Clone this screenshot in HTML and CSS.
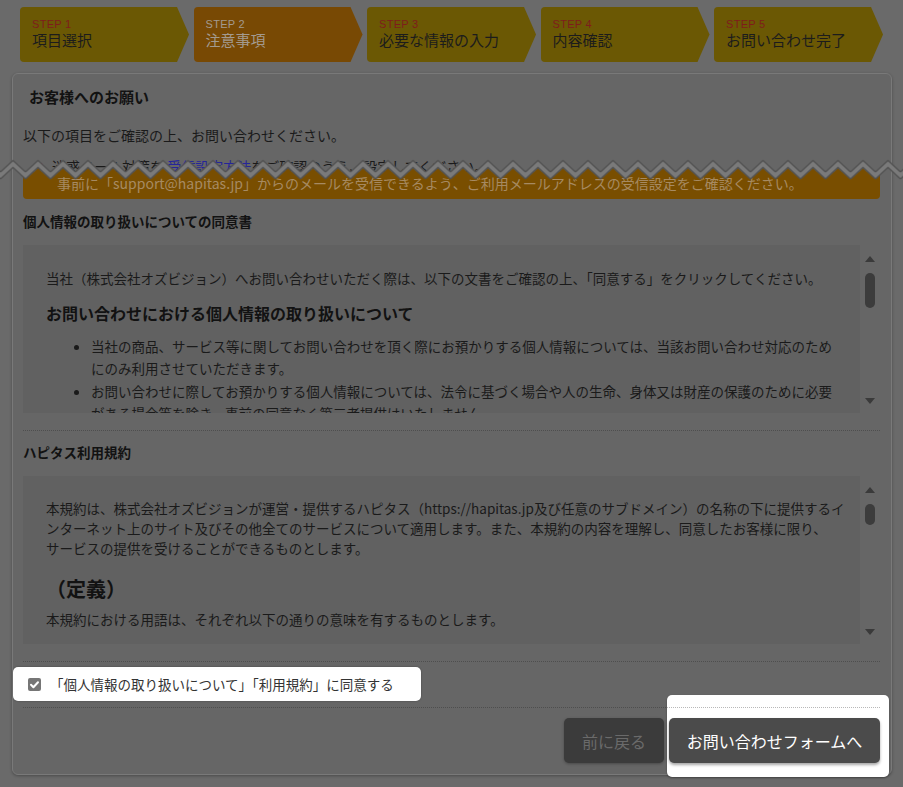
FILE: index.html
```html
<!DOCTYPE html>
<html lang="ja">
<head>
<meta charset="utf-8">
<title>お問い合わせ｜注意事項</title>
<link rel="stylesheet" href="styles.css">
</head>
<body>
<div class="page">
  <ol class="steps">
    <li class="step"><span class="step-no">STEP 1</span><span class="step-name">項目選択</span></li>
    <li class="step is-current"><span class="step-no">STEP 2</span><span class="step-name">注意事項</span></li>
    <li class="step"><span class="step-no">STEP 3</span><span class="step-name">必要な情報の入力</span></li>
    <li class="step"><span class="step-no">STEP 4</span><span class="step-name">内容確認</span></li>
    <li class="step"><span class="step-no">STEP 5</span><span class="step-name">お問い合わせ完了</span></li>
  </ol>

  <section class="card">
    <h2 class="card-title">お客様へのお願い</h2>
    <p class="intro">以下の項目をご確認の上、お問い合わせください。</p>
    <p class="cut-line"><span class="mark">▲</span>迷惑メール対策を <span class="link">受信設定方法</span>をご確認のうえ、設定してください。</p>
    <p class="notice">事前に「support@hapitas.jp」からのメールを受信できるよう、ご利用メールアドレスの受信設定をご確認ください。</p>

    <h3 class="sec-title">個人情報の取り扱いについての同意書</h3>
    <div class="scrollbox">
      <div class="sb-content">
        <p class="lead">当社（株式会社オズビジョン）へお問い合わせいただく際は、以下の文書をご確認の上、「同意する」をクリックしてください。</p>
        <h4 class="doc-title">お問い合わせにおける個人情報の取り扱いについて</h4>
        <ul class="doc-list">
          <li>当社の商品、サービス等に関してお問い合わせを頂く際にお預かりする個人情報については、当該お問い合わせ対応のため<br>にのみ利用させていただきます。</li>
          <li>お問い合わせに際してお預かりする個人情報については、法令に基づく場合や人の生命、身体又は財産の保護のために必要<br>がある場合等を除き、事前の同意なく第三者提供はいたしません。</li>
        </ul>
      </div>
      <div class="sb-bar"><span class="sb-up"></span><span class="sb-thumb"></span><span class="sb-down"></span></div>
    </div>

    <hr class="sep">

    <h3 class="sec-title sec-title-2">ハピタス利用規約</h3>
    <div class="scrollbox">
      <div class="sb-content">
        <p class="terms">本規約は、株式会社オズビジョンが運営・提供するハピタス（https://hapitas.jp及び任意のサブドメイン）の名称の下に提供するイ<br>ンターネット上のサイト及びその他全てのサービスについて適用します。また、本規約の内容を理解し、同意したお客様に限り、<br>サービスの提供を受けることができるものとします。</p>
        <h4 class="def-title">（定義）</h4>
        <p class="terms terms-2">本規約における用語は、それぞれ以下の通りの意味を有するものとします。</p>
      </div>
      <div class="sb-bar"><span class="sb-up"></span><span class="sb-thumb sb-thumb-small"></span><span class="sb-down"></span></div>
    </div>

    <hr class="sep">

    <label class="agree">
      <span class="check"><svg width="13" height="13" viewBox="0 0 13 13"><polyline points="3,6.8 5.4,9.2 10,4.2" fill="none" stroke="#fff" stroke-width="2" stroke-linecap="round" stroke-linejoin="round"/></svg></span>
      <span class="agree-text">「個人情報の取り扱いについて」「利用規約」に同意する</span>
    </label>

    <hr class="sep sep-last">

    <div class="footer">
      <span class="spot"></span>
      <button class="btn btn-prev" type="button">前に戻る</button>
      <button class="btn btn-next" type="button">お問い合わせフォームへ</button>
    </div>
  </section>

  <svg class="tear" width="903" height="34" viewBox="0 0 903 34" aria-hidden="true">
    <defs>
      <pattern id="zz" x="0.5" y="0" width="25" height="34" patternUnits="userSpaceOnUse">
        <polygon points="0,22 12.5,10.5 25,22 25,29 12.5,17.5 0,29" fill="#7a7a7a"/>
        <polyline points="0,22 12.5,10.5 25,22" fill="none" stroke="#525252" stroke-width="1.4"/>
        <polyline points="0,29 12.5,17.5 25,29" fill="none" stroke="#525252" stroke-width="1.4"/>
      </pattern>
      <pattern id="zo" x="0.5" y="0" width="25" height="34" patternUnits="userSpaceOnUse">
        <polygon points="7.6,22.5 12.5,17.5 17.4,22.5" fill="#794e00"/>
      </pattern>
    </defs>
    <rect x="23" y="0" width="857" height="34" fill="url(#zo)"/>
    <rect x="0" y="0" width="903" height="34" fill="url(#zz)"/>
  </svg>
</div>
</body>
</html>
```
FILE: styles.css
```css
* {
  box-sizing: border-box;
  margin: 0;
  padding: 0;
}

html,
body {
  height: 100%;
}

body {
  background: #6a6a6a;
  font-family: "Noto Sans CJK JP", "Noto Sans", sans-serif;
  color: #1a1a1a;
  overflow: hidden;
}

.page {
  position: relative;
  width: 903px;
  height: 787px;
  padding-top: 7px;
}

/* ---------- steps ---------- */
.steps {
  list-style: none;
  display: flex;
  gap: 4.5px;
  margin-left: 20px;
}

.step {
  width: 169px;
  height: 55px;
  background: #6b5804;
  border-radius: 4px 0 0 4px;
  clip-path: polygon(0 0, calc(100% - 12px) 0, 100% 50%, calc(100% - 12px) 100%, 0 100%);
  padding: 10px 0 0 12px;
  display: flex;
  flex-direction: column;
}

.step.is-current {
  background: #784904;
}

.step-no {
  font-family: "Liberation Sans", Arial, sans-serif;
  font-size: 11px;
  line-height: 14px;
  letter-spacing: 0.3px;
  color: #7e1c1c;
}

.step-name {
  font-size: 15px;
  line-height: 18px;
  color: #1c1c1c;
}

.is-current .step-no,
.is-current .step-name {
  color: #a39a8f;
}

/* ---------- card ---------- */
.card {
  position: relative;
  width: 880px;
  margin: 11px 0 0 12px;
  border: 1px solid #797979;
  border-radius: 6px;
  background: #666;
  padding: 0 11px 11px 10px;
  box-shadow: 0 1px 3px rgba(0, 0, 0, 0.3);
}

.card-title {
  padding: 11px 0 0 6px;
  font-size: 15px;
  line-height: 24px;
  font-weight: 700;
  color: #121212;
}

.intro {
  margin-top: 16px;
  font-size: 14px;
  line-height: 20px;
}

.cut-line {
  margin-top: 14px;
  height: 13px;
  overflow: hidden;
  padding-left: 14px;
  font-size: 14px;
  line-height: 14px;
  white-space: nowrap;
}

.cut-line .mark {
  font-size: 9px;
  color: #7e1c1c;
  margin-right: 6px;
  vertical-align: 2px;
}

.cut-line .link {
  color: #25259a;
}

.notice {
  background: #794e00;
  border-radius: 0 0 4px 4px;
  padding: 1px 10px 6px 34px;
  font-size: 14px;
  line-height: 20px;
  color: #a68a62;
  white-space: nowrap;
}

.sec-title {
  margin-top: 12px;
  font-size: 13.5px;
  line-height: 20px;
  font-weight: 700;
  color: #121212;
}

.sec-title-2 {
  margin-top: 11px;
}

/* ---------- scroll boxes ---------- */
.scrollbox {
  display: flex;
  height: 168px;
  margin-top: 14px;
}

.sb-content {
  flex: 1;
  background: #616161;
  overflow: hidden;
  padding: 22px 10px 0 23px;
  font-size: 13.5px;
  white-space: nowrap;
}

.lead {
  line-height: 22px;
}

.doc-title {
  margin-top: 11px;
  font-size: 16px;
  line-height: 26px;
  font-weight: 700;
  color: #121212;
}

.doc-list {
  margin-top: 9px;
  padding-left: 45px;
  list-style: disc;
}

.doc-list li {
  line-height: 22px;
}

.doc-list li + li {
  margin-top: 1px;
}

.terms {
  line-height: 20px;
}

.def-title {
  margin-top: 16px;
  font-size: 20px;
  line-height: 30px;
  font-weight: 700;
  color: #121212;
}

.terms-2 {
  margin-top: 5px;
}

.sb-bar {
  width: 20px;
  display: flex;
  flex-direction: column;
  align-items: center;
}

.sb-up {
  margin-top: 11px;
  width: 0;
  height: 0;
  border-left: 5px solid transparent;
  border-right: 5px solid transparent;
  border-bottom: 6px solid #3a3a3a;
}

.sb-thumb {
  margin-top: 11px;
  width: 10px;
  height: 35px;
  border-radius: 5px;
  background: #3c3c3c;
}

.sb-thumb-small {
  height: 21px;
}

.sb-down {
  margin-top: auto;
  margin-bottom: 9px;
  width: 0;
  height: 0;
  border-left: 5px solid transparent;
  border-right: 5px solid transparent;
  border-top: 6px solid #3a3a3a;
}

/* ---------- separators ---------- */
.sep {
  border: 0;
  border-top: 1px dotted #4e4e4e;
  margin-top: 17px;
}

.sep-last {
  margin-top: 6px;
}

/* ---------- agree row (highlighted) ---------- */
.agree {
  display: flex;
  align-items: center;
  width: 408px;
  height: 34px;
  margin: 5px 0 0 -10px;
  padding-left: 15px;
  background: #fff;
  border-radius: 5px;
  box-shadow: 0 0 2px rgba(0, 0, 0, 0.35);
  font-size: 13.5px;
  color: #333;
}

.check {
  width: 13px;
  height: 13px;
  border-radius: 2px;
  background: #767676;
  margin-right: 9px;
  display: flex;
}

/* ---------- footer ---------- */
.footer {
  position: relative;
  margin-top: 10px;
  display: flex;
  justify-content: flex-end;
  gap: 5px;
}

.spot {
  position: absolute;
  right: -9px;
  top: -23px;
  width: 222px;
  height: 82px;
  background: #fff;
  border-radius: 5px;
  box-shadow: 0 1px 2px rgba(0, 0, 0, 0.35);
  z-index: 0;
}

.spot::before {
  content: "";
  position: absolute;
  left: 0;
  top: 12px;
  width: 213px;
  border-top: 1px dotted #b8b8b8;
}

.btn {
  height: 45px;
  border: 0;
  border-radius: 5px;
  font-family: "Noto Sans CJK JP", "Noto Sans", sans-serif;
  font-size: 16px;
}

.btn-prev {
  width: 100px;
  background: #3b3b3b;
  color: #6a6a6a;
  box-shadow: 0 1px 3px rgba(0, 0, 0, 0.3);
}

.btn-next {
  position: relative;
  z-index: 1;
  width: 211px;
  background: #4b4b4b;
  color: #fff;
  box-shadow: 0 2px 3px rgba(0, 0, 0, 0.35);
}

/* ---------- torn edge ---------- */
.tear {
  position: absolute;
  left: 0;
  top: 150px;
  z-index: 5;
}
```
